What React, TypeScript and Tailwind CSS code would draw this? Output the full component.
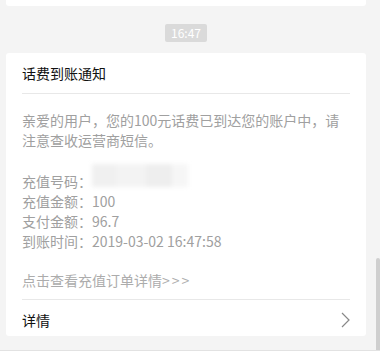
const font = { fontFamily: '"Noto Sans CJK SC", "Noto Sans", sans-serif' };

const fields = [
  { label: "充值金额：", value: "100" },
  { label: "支付金额：", value: "96.7" },
  { label: "到账时间：", value: "2019-03-02 16:47:58" },
];

export default function App() {
  return (
    <div
      className="relative h-[351px] w-[380px] overflow-hidden bg-[#f4f4f4]"
      style={font}
    >
      <div className="ml-[6px] h-[6px] w-[360px] rounded-b-[3px] bg-white" />

      <div className="mt-[18px] flex justify-center pr-[8px]">
        <span className="h-[18px] rounded-[2px] bg-[#dadada] px-[6px] text-[12px] leading-[18px] text-white">
          16:47
        </span>
      </div>

      <div className="ml-[6px] mt-[11px] w-[360px] rounded-[3px] bg-white px-[16px]">
        <div className="border-b border-[#e8e8e8] pb-[10px] pt-[10px] text-[14px] leading-[20px] text-[#111]">
          话费到账通知
        </div>

        <div className="mt-[16px] text-[14px] leading-[20px] text-[#a0a0a0]">
          <p>亲爱的用户，您的100元话费已到达您的账户中，请注意查收运营商短信。</p>
          <div className="h-[21px]" />
          <div className="flex">
            <span>充值号码：</span>
            <div className="relative h-[20px] w-[96px]">
              <div className="absolute -top-[7px] left-0 flex h-[23px] w-[96px] blur-[2px]">
                <div className="h-full w-[24px] bg-[#f0f0f0]" />
                <div className="h-full w-[30px] bg-[#f3f3f3]" />
                <div className="h-full w-[26px] bg-[#eeeeee]" />
                <div className="h-full w-[16px] bg-[#f6f6f6]" />
              </div>
            </div>
          </div>
          {fields.map((f) => (
            <div key={f.label}>
              {f.label}
              {f.value}
            </div>
          ))}
          <div className="h-[19px]" />
          <div className="text-[#acacac]">
            点击查看充值订单详情
            <span className="tracking-[2px]">&gt;&gt;&gt;</span>
          </div>
        </div>

        <div className="mt-[9px] flex items-center justify-between border-t border-[#e8e8e8] pb-[6px] pt-[10px]">
          <span className="text-[14px] leading-[20px] text-[#111]">详情</span>
          <svg width="9" height="16" viewBox="0 0 9 16">
            <polyline
              points="1,1 8,8 1,15"
              fill="none"
              stroke="#888"
              strokeWidth="1.2"
            />
          </svg>
        </div>
      </div>

      <div className="absolute bottom-0 right-0 top-[258px] w-[4px] rounded-t-[2px] bg-[#cfcfcf]" />
      <div className="absolute bottom-0 left-0 right-0 h-px bg-[#e2e2e2]" />
    </div>
  );
}
